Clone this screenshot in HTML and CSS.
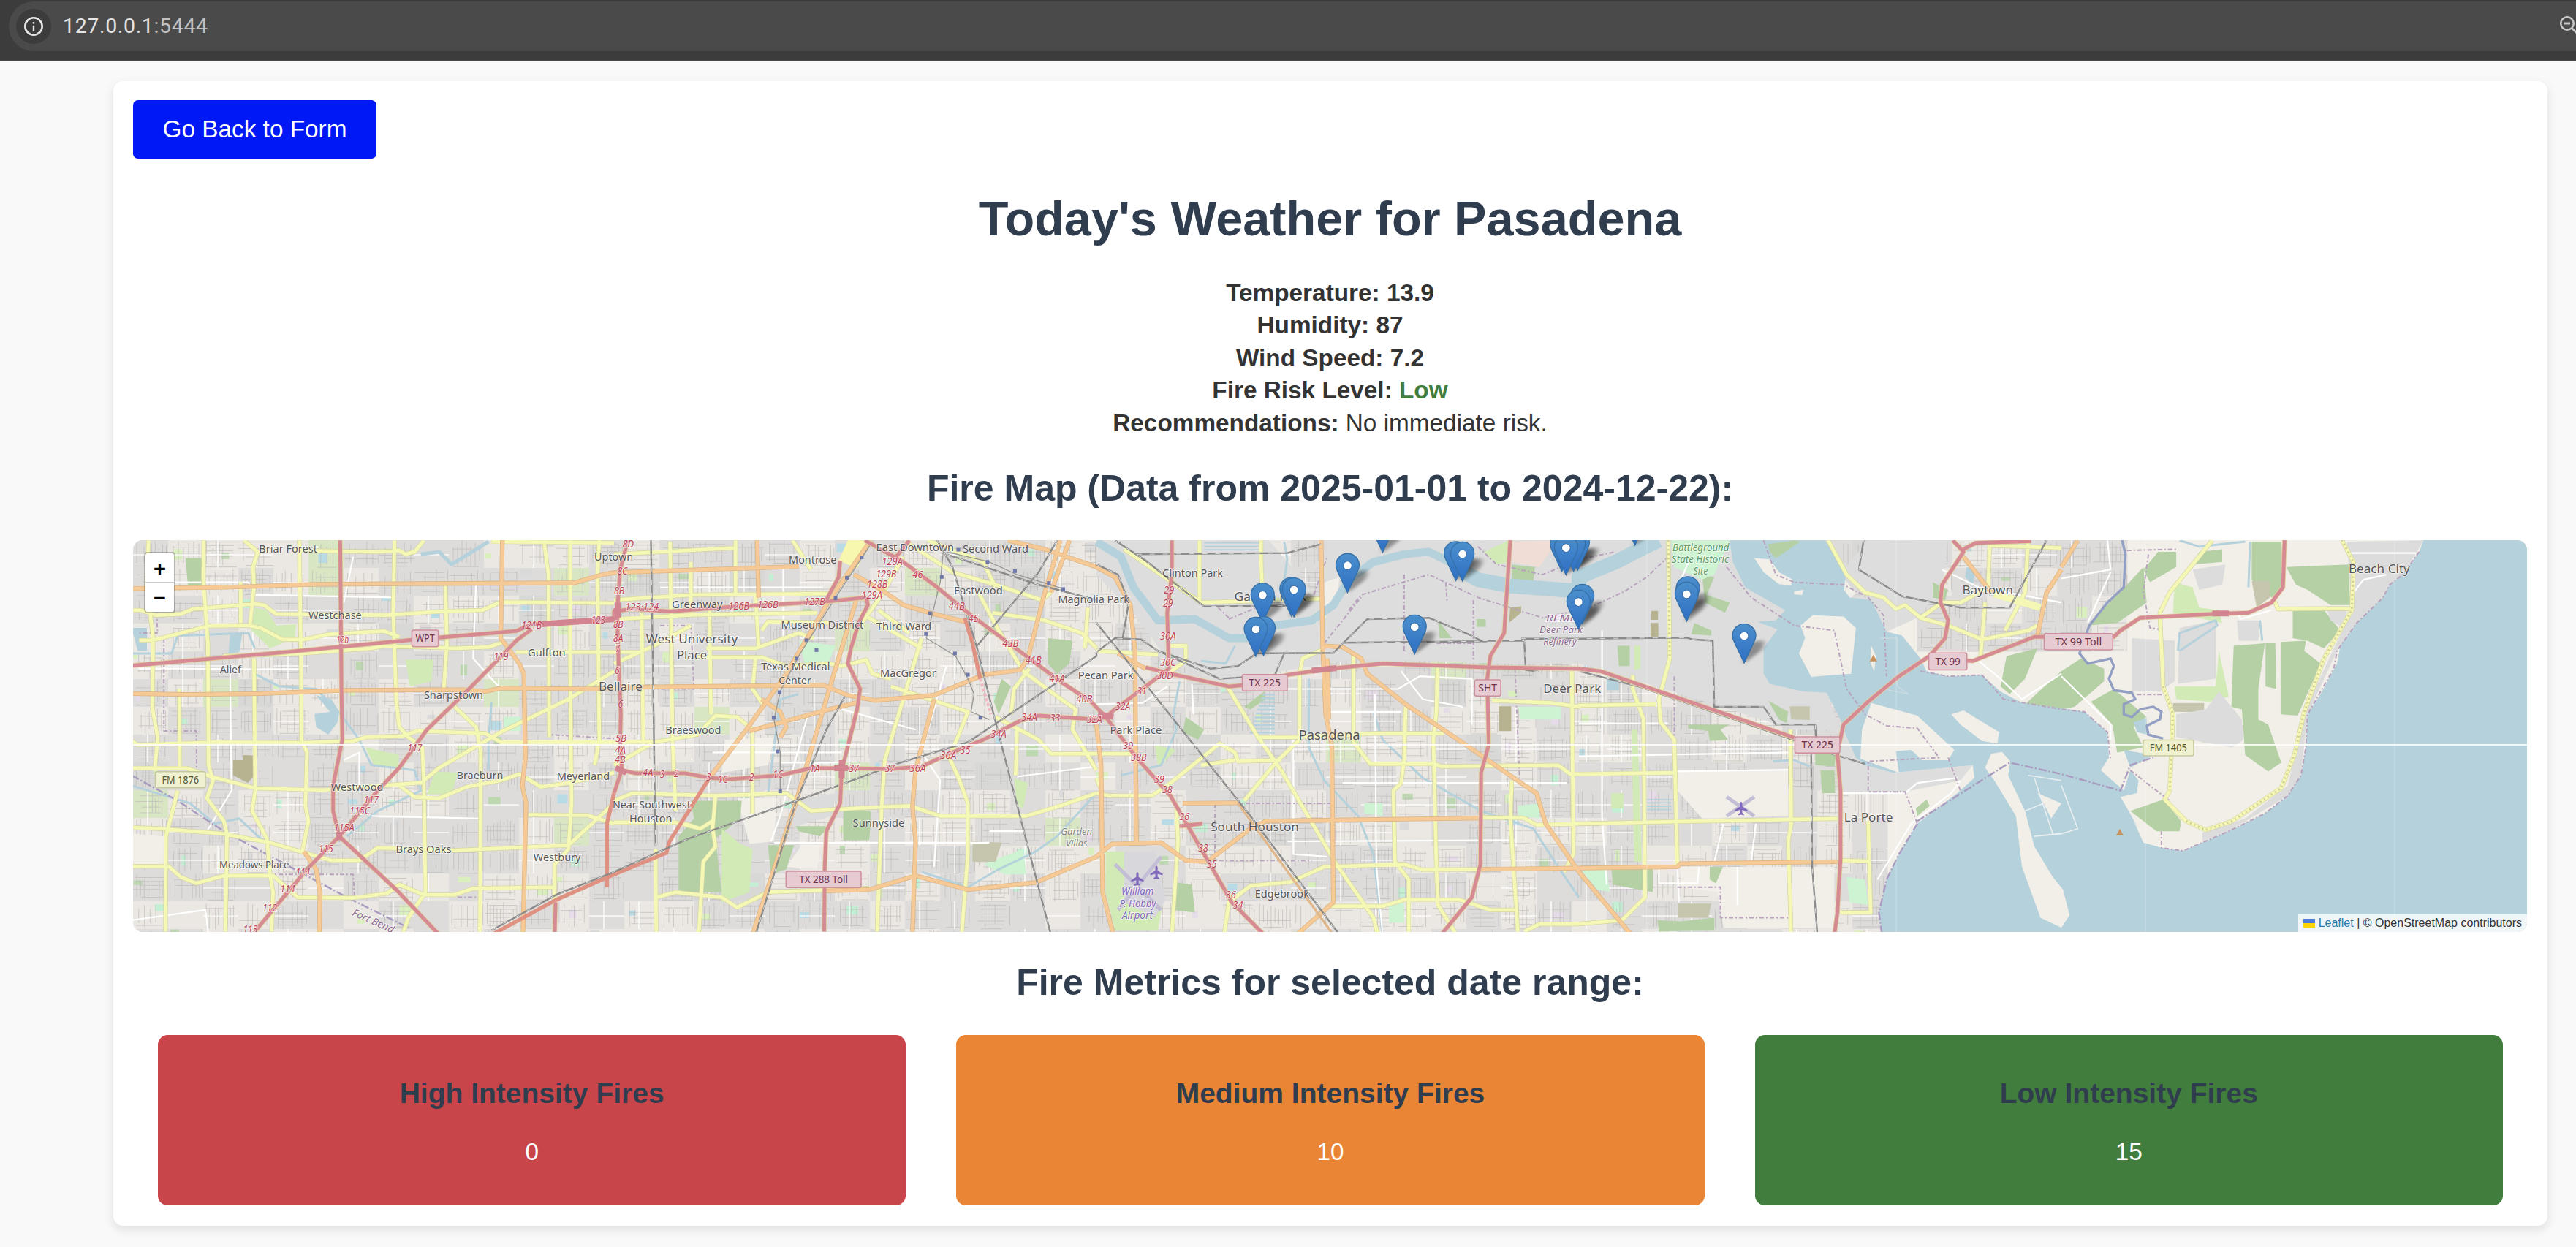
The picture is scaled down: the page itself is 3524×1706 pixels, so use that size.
FILE: index.html
```html
<!DOCTYPE html>
<html lang="en">
<head>
<meta charset="utf-8">
<title>Fire Weather Dashboard</title>
<link rel="stylesheet" href="styles.css">
</head>
<body>
<header class="browser-bar">
  <div class="omnibox">
    <span class="site-info">
      <svg width="28" height="28" viewBox="0 0 28 28"><circle cx="14" cy="14" r="11.7" fill="none" stroke="#e6e6e6" stroke-width="2.6"/><path d="M14 12.8V20" stroke="#e6e6e6" stroke-width="2.4"/><circle cx="14" cy="9.2" r="1.5" fill="#e6e6e6"/></svg>
    </span>
    <span class="url">127.0.0.1<span class="port">:5444</span></span>
    <svg class="zoom-icon" width="22" height="28" viewBox="0 0 22 28"><circle cx="10" cy="10" r="8.8" fill="none" stroke="#c7c7c7" stroke-width="2.5"/><path d="M6 10h8M16.500 16.500l8 8" stroke="#c7c7c7" stroke-width="2.800"/></svg>
  </div>
</header>
<main class="card">
  <button class="back">Go Back to Form</button>
  <h1>Today's Weather for Pasadena</h1>
  <div class="weather">
    <strong>Temperature: 13.9</strong>
    <strong>Humidity: 87</strong>
    <strong>Wind Speed: 7.2</strong>
    <strong>Fire Risk Level: <span class="risk-low">Low</span></strong>
    <span><strong>Recommendations:</strong> No immediate risk.</span>
  </div>
  <h2>Fire Map (Data from 2025-01-01 to 2024-12-22):</h2>
  <section class="map">
    <svg id="tiles" class="tiles" width="3275" height="536" viewBox="0 0 3275 536"></svg>
    <div class="zoom-control"><span>+</span><span>−</span></div>
    <div class="attribution"><svg width="16" height="12" viewBox="0 0 12 8" preserveAspectRatio="none"><path fill="#4C7BE1" d="M0 0h12v4H0z"/><path fill="#FFD500" d="M0 4h12v4H0z"/></svg><span><a>Leaflet</a> | © OpenStreetMap contributors</span></div>
  </section>
  <h2 class="metrics-title">Fire Metrics for selected date range:</h2>
  <section class="metrics">
    <div class="metric high"><h3>High Intensity Fires</h3><p>0</p></div>
    <div class="metric medium"><h3>Medium Intensity Fires</h3><p>10</p></div>
    <div class="metric low"><h3>Low Intensity Fires</h3><p>15</p></div>
  </section>
</main>
<script src="map.js"></script>
</body>
</html>
```

FILE: styles.css
```css
* { box-sizing: border-box; }
html, body { margin: 0; height: 1706px; overflow: hidden; }
body {
  background: #f9f9f9;
  color: #333;
  font: 33.33px/44.44px "Liberation Sans", Arial, sans-serif;
}
.browser-bar { height: 84px; padding: 2px 0 0 12px; background: #3c3c3c; border-bottom: 2px solid #474747; }
.omnibox {
  height: 68px; display: flex; align-items: center; padding-left: 10px;
  background: #4a4a4a; border-radius: 34px 0 0 34px; overflow: hidden;
}
.site-info { width: 48px; height: 48px; border-radius: 50%; background: #3c3c3c; display: flex; align-items: center; justify-content: center; }
.url { margin-left: 16px; font: 28.5px/40px Roboto, sans-serif; letter-spacing: .65px; color: #e3e3e3; }
.port { color: #c0c0c0; }
.zoom-icon { margin-left: auto; }
.card {
  margin: 27px 39px 0 155px; padding: 26px 28px 27px 27px; height: 1566px;
  background: #fff; border-radius: 13.3px; box-shadow: 0 5px 14px rgba(0,0,0,.11);
}
.back {
  display: block; width: 333px; height: 80px; padding: 0; border: 0; border-radius: 6.7px;
  background: #0018f5; color: #fff; font: 33.33px "Liberation Sans", Arial, sans-serif;
}
h1, h2, h3 { color: #303d4f; font-weight: bold; text-align: center; }
h1 { margin: 38px 0 35px; font-size: 66.67px; line-height: 89px; }
h2 { margin: 34px 0 37px; font-size: 50px; line-height: 67px; }
.weather { display: flex; flex-direction: column; align-items: center; }
.risk-low { color: #417d3c; }
.map { position: relative; height: 536px; overflow: hidden; border-radius: 13.3px; background: #ddd; }
.tiles { display: block; }
.zoom-control {
  position: absolute; left: 15px; top: 16px; width: 43px; height: 84px; background: #fff;
  border: 2px solid rgba(0,0,0,.22); background-clip: padding-box; border-radius: 5px;
}
.zoom-control span { display: block; height: 40px; text-align: center; font: bold 29px/43px "Liberation Sans", sans-serif; color: #000; }
.zoom-control span:first-child { border-bottom: 1px solid #ccc; }
.attribution {
  position: absolute; right: 0; bottom: 0; height: 24px; padding: 0 7px; display: flex; align-items: center; gap: 5px;
  background: rgba(255,255,255,.8); font-size: 16px; line-height: 24px; color: #333; white-space: nowrap;
}
.attribution a { color: #2a7cae; }
.metrics-title { margin: 36px 0 38px; }
.metrics { display: flex; gap: 69px; padding: 0 33px 0 34px; }
.metric { flex: 1; height: 233px; padding-top: 54px; border-radius: 13.3px; color: #fff; text-align: center; }
.metric h3 { margin: 0 0 32px; font-size: 39px; line-height: 52px; }
.metric p { margin: 0; }
.high { background: #c84549; }
.medium { background: #e98534; }
.low { background: #417d3c; }

.tiles text { font-family: "Noto Sans", sans-serif; paint-order: stroke; stroke: rgba(255,255,255,.6); stroke-width: 2px; }
.place { fill: #555; }
.exit { fill: #bd4456; font-style: italic; }
.site { fill: #8d6a90; font-style: italic; }
.park-name { fill: #5d9a62; font-style: italic; }
.air { fill: #8068bb; font-style: italic; }
.grey { fill: #888; font-style: italic; }
.tiles .ref { fill: #6e3048; stroke: none; }
.tiles .ref-fm { fill: #565830; stroke: none; }
```

FILE: map.js
```js
// Survey sheets A-E, west to east: [x offset, x scale]; all share one y scale.
const SHEET = { A: [-2, .42092], B: [658, .42092], C: [1318, .42092], D: [1978, .42092], E: [2638, .44898] };
const SY = .34758, OY = -5;
const out = [];
const pt = (s, x, y) => [SHEET[s][0] + x * SHEET[s][1], OY + y * SY];

// "A 1,2 3,4 B 5,6" -> map-space path; a letter switches sheet.
function path(str) {
  let s = 'A', d = '';
  for (const t of str.trim().split(/\s+/)) {
    if (SHEET[t]) { s = t; continue; }
    const [x, y] = t.split(',').map(Number), p = pt(s, x, y);
    d += (d ? 'L' : 'M') + p[0].toFixed(1) + ' ' + p[1].toFixed(1);
  }
  return d;
}
const join = (list, z = '') => list.trim().split('\n').map(l => path(l) + z).join('');
const fill = (c, list) => out.push(`<path fill="${c}" d="${join(list, 'Z')}"/>`);
const line = (c, w, list, extra = '') => out.push(`<path fill="none" stroke="${c}" stroke-width="${w}" stroke-linejoin="round" ${extra} d="${join(list)}"/>`);

// Deterministic city blocks.
let seed = 7;
const rnd = () => (seed = (seed * 16807) % 2147483647) / 2147483647;
function blocks(x0, y0, x1, y1) {
  let streets = '', white = '';
  for (let x = x0; x < x1; x += 48) for (let y = y0; y < y1; y += 38) {
    const w = 48, h = 38, r = rnd();
    const c = r < .58 ? '#dddcdb' : r < .95 ? '#ebe8e3' : r < .97 ? '#d8e6c4' : '#d8d8d6';
    out.push(`<rect x="${x}" y="${y}" width="${w + .5}" height="${h + .5}" fill="${c}"/>`);
    if (rnd() < .3) out.push(`<rect x="${x + rnd() * 30}" y="${y + rnd() * 20}" width="${5 + rnd() * 12}" height="${5 + rnd() * 10}" fill="${['#c3f0d4', '#bdd8b0', '#dadada', '#d9efbd', '#b9dbe6', '#e6dbe8'][Math.floor(rnd() * 6)]}"/>`);
    if (rnd() < .86) {
      const a = 4 + rnd() * 5, b = 5 + rnd() * 8;
      for (let i = a; i < w; i += a) if (rnd() < .7) streets += `M${x + i} ${y + rnd() * 12}V${y + h - rnd() * 10}`;
      for (let j = b; j < h; j += b) if (rnd() < .7) streets += `M${x + rnd() * 14} ${y + j}H${x + w - rnd() * 12}`;
    }
    if (rnd() < .24) white += `M${x + 20} ${y}v${h}`;
    if (rnd() < .24) white += `M${x} ${y + 20}h${w}`;
  }
  out.push(`<path d="${streets}" stroke="#bdbab8" stroke-width=".9" opacity=".75"/><path d="${white}" stroke="#fff" stroke-width="1.6" opacity=".85"/>`);
}
out.push('<rect width="3275" height="536" fill="#f2efe9"/>');
blocks(0, 0, 2380, 536);
blocks(2440, 0, 2710, 130);

// industrial ground along the ship channel
fill('#dddddd', `C 0,15 560,15 720,240 750,15 1568,15 D 490,15 540,200 670,290 600,540 730,610 805,615 850,760 700,760 250,590 0,500 C 1280,500 860,480 600,530 430,570 240,500 120,300 0,150
D 940,15 1200,15 1180,200 1100,320 1000,375 940,250 860,130
D 850,740 930,900 1020,930 1280,900 1240,960 1060,1005 850,1005`);
fill('#f2efe9', `C 740,180 790,160 785,210 740,330
D 320,920 680,920 680,1100 400,1110 320,1000
D 330,1300 830,1300 830,1540 470,1540 450,1400 330,1380
A 0,1170 110,1180 110,1290 0,1290
B 360,800 520,790 500,900 350,930
B 400,1030 530,1030 520,1200 440,1210
B 610,1215 670,1215 660,1310 560,1300`);
fill('#b4d0a4', `A 175,85 228,85 228,190 183,190
B 250,1040 415,1040 410,1110 330,1190 350,1400 210,1400 210,1180 260,1110
B 745,1070 835,1080 830,1195 745,1195
B 500,1215 585,1215 560,1310 510,1330
B 590,1140 700,1140 670,1180 600,1160
B 1410,400 1490,410 1480,500 1440,540 1410,500
B 1260,560 1290,590 1250,700 1235,650
C 480,670 545,610 550,640 500,680
C 290,710 350,760 330,800 280,770
C 1350,110 1425,120 1420,175 1350,170
C 1110,330 1155,400 1115,400
C 1235,325 1265,325 1265,355 1235,355
C 250,1360 310,1370 320,1480 250,1470
D 400,150 440,160 415,230 490,260 475,300 410,260
D 375,340 430,370 430,390 365,385
D 125,430 165,430 165,510 130,510
D 355,740 490,740 460,760 485,800 425,805 420,765 355,755
D 615,645 680,690 675,735 650,720
D 768,855 835,855 830,905 768,900
D 785,920 830,920 833,1010 790,1010
D 425,1300 468,1300 445,1365 425,1350
D 255,1510 330,1515 440,1500 440,1550 260,1555
D 105,1300 240,1305 240,1400 110,1370
D 1150,180 1200,210 1190,250 1150,240
D 1390,470 1490,440 1450,560 1400,620 1370,590
E 580,20 670,20 680,200 640,240 580,170
E 525,430 620,420 600,600 600,720 630,740 670,890 630,925 560,860 550,680 518,670
E 622,420 652,420 655,600 622,590
E 668,415 745,410 740,450 790,500 720,705 668,700
E 705,290 800,290 850,370 800,440 750,410 705,400
E 685,120 875,110 880,270 820,270 750,210 715,190
E 80,350 200,190 250,120 260,260 170,340
D 1450,660 1568,530 E 60,480 130,520 130,570 40,670 0,680
E 90,650 160,600 260,710 220,750 250,830 170,850 155,740
E 295,60 350,60 350,120 270,180 250,130
E 490,50 490,100 400,110 420,60
E 430,760 442,760 442,810 430,810`);
fill('#d2eab5', `A 400,280 440,290 470,350 535,345 530,400 450,440 390,370
A 890,485 980,485 975,570 905,590
A 760,830 870,860 865,910 790,905
A 985,925 1060,930 1040,1015 960,1015
B 350,1150 410,1210 450,1230 440,1400 350,1440
B 1300,950 1345,970 1330,1070 1310,1060
C 1260,60 1340,15 1345,100 1300,110
C 190,820 260,840 200,910
C 30,1240 100,1240 220,1400 200,1550 60,1550 30,1400
D 180,430 200,430 200,520 180,525
D 105,1010 145,1010 145,1070 105,1070
D 170,760 190,760 205,1280 180,1280
E 345,180 400,200 420,280 480,290 490,340 340,300
E 480,450 510,630 450,650 350,640 345,590 470,590`);
fill('#d8d7dc', `C 90,1240 190,1240 225,1430 190,1500 90,1440`);
fill('#cdf3d2', `B 600,410 720,430 700,490 620,500
B 1200,1290 1330,1230 1340,1330 1270,1330
C 1370,1060 1440,1050 1440,1110 1370,1100
C 870,1050 930,1050 930,1100 870,1090
C 1370,670 1510,670 1510,720 1380,720
D 300,15 490,15 440,150 400,170 310,120
D 5,1310 90,1310 100,1400 60,1390
D 870,1340 930,1350 940,1450 880,1440
C 950,1440 1000,1440 1000,1520 950,1520
A 1210,710 1265,710 1265,765 1210,765`);
fill('#b7b391', `A 330,880 362,880 362,860 398,862 395,945 378,970 330,940
C 1308,668 1348,668 1348,766 1308,766
C 1345,280 1380,275 1380,300 1340,340
D 235,293 257,293 257,328 235,328
D 233,340 258,340 258,398 233,398`);
fill('#c6c5ae', `D 323,1445 430,1445 420,1500 323,1500
D 685,668 750,668 750,722 690,720
B 1165,1200 1260,1205 1240,1280 1165,1280
E 580,175 635,175 635,240 595,280
E 340,655 435,655 435,692 340,690`);
fill('#dcdcdc', `E 215,400 345,410 345,570 300,610 215,610
E 350,700 440,680 480,610 550,720 555,800 520,830 350,790
E 360,360 470,330 470,560 355,580
E 400,130 500,110 490,190 420,210
E 535,330 605,330 600,410 540,410
E 870,20 1105,15 1040,150 980,240 900,340 840,450 750,700 730,940 690,1020 510,1160 430,1200 430,1165 560,1110 690,980 740,690 885,290
E 810,290 870,290 860,360 820,330
B 590,1040 720,1010 710,1100 590,1140`);
fill('#efddd6', `C 1345,20 1500,15 1440,120 1350,100`);
fill('#f8f7b0', `B 760,15 835,15 790,125 730,95`);

// water
line('#b4d1dc', 11, `C 0,20 80,80 120,200 200,330 320,325 430,400 520,400 580,350 700,330 770,270 820,170 900,100 1000,70 1080,60 1200,130`);
line('#b4d1dc', 20, `C 1180,130 1240,170 1350,195 1568,215 D 0,160 120,100 200,50 260,15`);
line('#b4d1dc', 3, `A 0,460 130,460 150,390 380,380 400,440
A 400,540 480,590 600,600 680,700 740,800 780,900 920,920 940,1000 800,1080 700,1180
A 0,980 190,1050 270,1130 350,1110 420,1190 560,1240
B 1568,1010 1440,1180 1370,1240 1250,1310 1150,1380 1000,1320
C 600,250 620,90 610,20
C 690,560 690,830 740,960 850,1100 900,1250 930,1568
C 900,690 930,800 1060,950 1250,1080 1420,1150 1500,1300 1568,1420
C 450,430 420,500 340,490
C 270,570 250,700 260,760 210,900 80,940
D 630,885 700,880 750,905
E 360,15 420,40 560,20
E 355,450 360,380 470,330 475,350 360,450
E 575,20 570,200
E 605,330 612,410
A 1170,650 1160,800 1160,920
B 500,1020 540,640 600,620`);
line('#b4d1dc', 5, `A 940,70 1000,60 1040,110 1160,20`);
fill('#b4d1dc', `A 0,360 50,360 50,450 20,450
A 320,385 360,385 350,455 315,460
A 600,625 650,640 675,690 670,730 640,780 600,750 595,700 645,690
D 490,15 500,100 540,200 670,290 640,330 580,335 645,365 600,440 600,540 620,580 730,610 805,615 850,720 860,760 900,870 930,900 1020,930 1280,900 1285,950 1230,1010 1100,1130 1040,1250 1000,1350 975,1480 985,1568 E 1425,1568 1425,10 1105,10 1090,60 1040,150 1000,190 980,240 900,340 850,430 840,500 790,620 750,700 745,830 730,940 690,1020 620,1090 510,1160 370,1237 305,1225 250,1205 220,1120 235,1150 205,1080 180,1025 230,1010 235,960 210,920 190,1000 120,920 145,870 140,770 70,690 0,675 D 1440,655 1370,610 1310,545 1200,550 1130,530 1110,480 1050,390 1000,375 950,250 880,240 860,130 800,15
E 220,730 260,715 260,780 230,770
E 190,840 280,860 210,910
D 1260,120 1290,130 1280,190 1255,160
D 90,555 130,560 130,605 90,605`);
line('#b4d1dc', 1.6, `C 350,25 530,25
C 350,38 530,38
C 350,52 530,52
D 220,1035 300,1035
D 220,1048 300,1048
D 220,1062 300,1062
D 220,1075 300,1075`);
for (let y = 622; y < 785; y += 15) line('#b4d1dc', 2.6, `C ${540 - (y - 622) * .28},${y} 580,${y}`);
fill('#f2efe9', `D 570,85 620,90 650,140 695,170 690,192 650,188 600,140
D 720,350 760,310 860,315 900,360 885,540 825,545 755,552 715,460 735,400
D 950,655 1100,705 1220,840 1200,880 1115,880 1080,840 1030,845 1040,930 915,875 920,760
D 1210,700 1250,685 1365,770 1360,815 1310,805 1240,740
D 1340,855 1375,848 1402,885 1395,940 1450,1080 1480,1220 1540,1340 E 5,1390 25,1490 0,1540 D 1500,1500 1440,1300 1420,1100 1350,960 1320,910
D 1490,1010 1568,1050 1535,1110 1510,1050
D 950,430 965,470 960,530 948,500
D 700,215 730,210 725,230 700,228
D 865,170 900,225 880,240 862,210`);
fill('#b4d0a4', `D 615,30 700,15 720,20 640,85 620,60
E 210,1080 310,1035 365,1120 360,1160 290,1160
D 1095,1070 1130,1035 1140,1060 1100,1100`);
line('#e9eff0', 1.6, `E 0,980 50,1150 0,1170 D 1480,1180 1568,1168
D 1460,940 1568,960
D 1480,950 1540,1170
D 1450,1080 1510,1050`);
line('#cfdde1', 1.2, `D 980,400 1035,400 1035,590 1070,620 990,600`);

// minor white roads
line('#fff', 2.2, `A 100,180 380,180 400,230 850,240
A 20,520 160,520 330,522 550,522
A 320,520 325,1000 240,1170
A 720,80 690,260
A 1015,190 1120,180 1110,480 1200,600
A 690,880 740,850 740,980
A 780,1100 1130,1110
A 0,1510 240,1470 250,1568
B 150,200 680,200
B 550,120 550,400
B 320,850 740,850
B 520,1205 1220,1205
B 540,890 740,890
B 630,700 540,1100 510,1200
B 1080,510 1000,850 1060,960 1040,1300
B 1310,945 1568,905
B 1220,1160 1330,1160
B 740,680 980,760
C 580,600 980,600 1050,550 1220,560 1220,740
C 740,690 990,690
C 640,780 640,1250 750,1260
C 530,1120 1000,1110
C 620,1200 1350,1195
C 905,620 910,1300 930,1568
C 800,970 1530,970
C 990,530 1060,640 1190,670
C 310,580 315,700
C 0,660 150,655 230,590
D 0,735 290,735
D 0,865 690,850
D 75,370 75,1100 90,1370
D 310,925 680,918
D 850,1010 1060,1010 1100,970 1230,950
D 1240,960 1210,1010 1080,1130 970,1350
D 260,1310 260,1365 385,1365 390,1300
D 470,1130 440,1280
D 575,1130 560,1280
D 515,1300 515,1450
D 320,1300 325,1440
D 310,230 360,90
D 1180,130 1300,200 1568,260
D 1300,490 1370,560 1440,640 1568,540
E 870,65 1080,65
E 990,150 920,170 890,220
E 0,550 150,740 150,800
E 540,310 545,325 640,290
E 0,165 150,130 140,15
E 80,340 150,140`);
// boundaries
line('#b8a2bd', 2, `C 430,320 370,250
C 430,325 560,260 700,250 750,80
C 820,290 860,230 1080,150 1240,240 1450,320 D -40,300
C 740,420 860,240
C 1000,150 1000,460
C 1135,180 1140,260
C 1225,250 1225,490
C 1105,420 1225,420
C 1240,40 1300,110 1450,150 D 0,90 120,60
C 385,1050 770,1050
C 385,1050 385,1275 700,1275
C 1360,520 1375,950
D 480,120 560,240 700,350 830,370 870,600 930,700 1000,745 1100,755 1170,870 940,885 940,1005 1060,1005 1100,1130
D 1200,870 1240,1000
D 600,15 640,150 700,180 860,190 940,240 990,310 1000,550
D 310,550 310,820
D 0,300 150,215 220,160 290,80
D 1110,530 1200,550 1310,545 1380,640 E 0,680 70,690 140,770 150,880
E 1090,60 1040,150 1000,190 980,240 900,340 840,450 830,520 750,700 745,830 730,940 690,1020 620,1090 510,1160 370,1237 305,1225 305,1160
E 200,55 350,50
E 265,70 250,220 270,360 300,365
E 230,622 310,622
E 210,920 330,1040
A 80,300 85,380 20,380
A 105,400 105,765 210,765 212,930
A 1360,680 1360,780 1568,795
A 310,1530 310,1330 720,1330 725,1430
A 1060,1420 1135,1420 1135,1540
B 150,350 250,350 260,600 130,600
D 320,1380 460,1380 460,1500 690,1500`, 'stroke-dasharray="6 3 2 3"');
line('#a99bc0', 2.4, `A 0,940 150,1040 300,1160 700,1420 900,1540
D 1100,1120 1230,1020 1400,890 1568,935 E 0,935 180,1000 210,900 280,870
D 1100,1130 1040,1250 1000,1350 975,1480 985,1568`, 'stroke-dasharray="11 3 2 3"');
line('#929fc2', 3.4, `E 185,15 195,70 190,200 140,260 85,350 55,460 80,500 150,480 160,510 145,560 160,605 215,615 225,640 190,660 190,700 215,710 240,680 280,670 305,690 300,720 260,745 265,780 310,795`);

// road network
const yellow = `A 55,15 50,200 70,400 68,680 85,790 75,920
A 235,15 233,170 248,420 250,900 265,960 245,1030 300,1120 310,1170 305,1555
A 0,290 30,290 80,310 160,305 200,285 400,265 430,270 470,305 830,310 1000,295 1140,290 1200,258 1568,262
A 25,408 70,408 160,380 250,352 380,350 420,360 490,405 560,405 640,385 820,372 870,395
A 300,470 560,460 780,440 820,430 1060,440 1160,435 1210,415
A 365,15 410,60 395,120 398,200 385,345
A 520,55 800,60 870,55 890,70 920,60 950,15
A 545,15 550,430 552,800 570,850 565,1060 575,1120 555,1240
A 398,480 402,1000 392,1080 440,1190 450,1330 460,1400 455,1555
A 355,180 355,340
A 855,15 850,290 860,640 870,750 900,790 945,830 950,980 955,1400 900,1500 880,1568
A 1020,190 1025,420 1015,600
A 1050,670 1120,750 1135,850 1132,1568
A 0,805 20,820 270,810 560,812 720,805 760,790 880,785 930,765 1150,775 1200,810 1568,810 B 130,808
A 0,912 180,912 260,945 400,990 620,998 950,968
A 1568,530 1420,640 1200,770 1000,910 950,960
A 870,980 920,1025 1000,1030 1090,985 1200,960 1260,935 1330,985 1420,970 1568,930
A 0,1145 90,1150 300,1170 450,1205 550,1240 650,1275 740,1275 800,1225 1050,1235 1420,1215 1568,1050
A 0,1298 120,1298 160,1340 210,1365 300,1335 460,1335 540,1420 720,1422 830,1405 870,1370 950,1410 1050,1410 1110,1385 1375,1380
A 1375,1568 1375,1290 1420,1230 1430,1050 1425,480 1425,15
A 1340,15 1355,150 1357,790
A 1520,15 1515,150 1520,800 1505,900
A 1170,20 1568,25
A 155,600 157,910
A 110,1555 112,1180 150,1000
A 1290,1095 1480,1097 1568,1130
A 1250,455 1568,455 B 90,455
B 0,70 390,45
B 182,20 190,800 200,1080
B 395,15 395,230
B 250,100 250,300
B 0,250 250,230 700,225
B 0,325 260,308 660,300
B 90,300 95,820
B 310,290 315,700
B 300,440 460,440 600,380 650,400
B 480,370 500,335 700,340
B 0,500 130,430 250,350
B 270,475 480,475 560,510 700,500 740,510 820,485 840,540 900,560
B 0,900 130,810 270,780 330,705 400,710 450,760 450,1090
B 460,230 470,430
B 460,480 450,600 490,670
B 580,15 640,130
B 940,80 870,230 800,350
B 800,300 1000,440
B 860,290 960,380
B 960,30 1100,140 1240,190 1390,250 1420,220
B 1020,15 1200,100 1240,200
B 1180,210 1250,370 1330,530 1430,620 1500,680 1490,760 1568,920
B 1000,400 880,880 870,1060 855,1555
B 900,590 1150,690 1090,870 1120,950 1150,1050 1150,1250 1130,1568
B 0,1040 60,1010 200,1015 330,1020 560,1010 640,1080 780,1070 960,1060 1060,1100 1340,1100 1450,1060 1568,1010
B 330,1020 320,1150 330,1220 290,1280 275,1568
B 0,1125 200,1125 280,1150
B 230,1130 280,1150 320,1120
B 135,1230 137,1568
B 137,1420 200,1400 350,1420 400,1460 500,1400 830,1385
B 1240,710 1380,800 1420,855 1568,855 C 130,855
B 1310,760 1305,940
B 1290,700 1300,600 1350,520
B 1230,300 1400,330 1520,380 1568,440
B 1540,280 1530,440
C 90,50 340,260 730,245
C 335,15 335,260
C 535,15 535,100 540,250
C 240,430 290,430 290,490 230,540
C 0,450 200,465
C 735,445 670,480 660,540 660,800 590,880 480,1040
C 835,460 835,810 890,895 1100,895 1120,905 1500,900 1540,935 1568,935 D 310,930
C 1108,500 1105,690 1095,800 1105,1310 1110,1450 1170,1568
C 1005,670 1000,880 990,970 965,1000 970,1280 1015,1350 1015,1568
C 425,590 520,780 600,920 780,1290 900,1500 915,1568
C 530,790 650,790 900,775 1130,775
C 0,1010 40,1020 180,1020 230,980 400,815 450,850 460,885 600,880
C 340,900 450,880
C 0,950 20,1010
C 260,1060 265,1200 245,1568
C 415,1568 430,1440 500,1375 630,1360 740,1300 1000,1290 1060,1312 1240,1310
C 760,1455 930,1455 1000,1430 1180,1430 1280,1470 1370,1470
C 1350,960 1345,1110 1370,1568
C 1250,1105 1390,1108 1430,1135 1568,1130 D 400,1120 840,1110
C 1285,645 1480,655 1568,670 D 0,665 250,660
C 1545,530 1550,1250 1520,1320
C 1390,1555 1440,1525 1568,1525 D 0,1525 140,1510 215,1420 210,720 175,600 175,545
D 290,15 295,480 260,640 265,730 310,800 320,1300
D 688,760 690,1130 680,1200 690,1568
D 850,1275 945,1278
D 940,1120 948,1480 850,1480
D 810,15 870,150 930,220 990,240 1030,285 1060,270 1110,320 1200,350 1310,405 1460,370 1490,350
D 1335,30 1330,200 1240,260 1180,260 1110,320
D 1320,260 1305,480
D 1460,20 1450,220 1385,370
D 1330,35 1568,45
E 460,15 330,220 300,300 310,590 340,700 330,1000 315,1035 380,1120 440,1155 520,1120 670,990 710,860 740,690 800,480 885,290 890,100 855,15
E 650,255 660,285 880,283`;
line('#d5d6a4', 6.2, yellow); line('#f5f7b4', 4.8, yellow);
line('#d0cd98', 3, `E 310,590 340,700 330,1000
E 380,1120 440,1155 520,1120 670,990 710,860 740,690 800,480 885,290 890,100 855,15
D 290,15 295,480`, 'stroke-dasharray="2 4"');
line('#f5f7b4', 10, 'D 1350,225 1500,280');
const orange = `A 0,205 300,200 600,188 1440,182 1530,150 1568,142 B 300,130 600,118
A 0,618 200,622 420,618 700,605 1080,603 1150,610 1200,597 1500,600 B 95,592 680,585 760,625 850,645 1040,625 1200,545 1320,525 1345,480 1400,220 1440,60 1450,15
A 1205,15 1200,400 1260,500 1275,540 1280,870 1270,980 1282,1050 1272,1568
A 560,1240 600,1310 612,1400 610,1568
B 465,15 470,240
B 835,15 780,110 700,250 560,540 430,760 310,950
B 780,150 870,210 940,270 1040,305 1140,335
B 440,765 700,680 800,650
B 480,640 540,690 560,750 540,790
B 790,240 690,640 590,1050 450,1568
B 1040,640 980,920 970,1060 980,1200 970,1555
B 683,1395 830,1390 980,1335 1150,1390 1370,1362 1568,1260 C 50,1210 210,1205 290,1275 360,1280 500,1150 550,1120 1250,1108
B 1280,15 1400,50 1568,120 C 60,160 110,270 125,450 130,1210
B 1480,15 1420,220
C 70,460 160,520
C 0,740 15,900 20,1400 55,1568
C 280,1050 460,1048
C 730,15 735,430 745,700 765,820 770,1440 650,1568
C 750,480 755,720
C 735,430 800,435 860,480 880,540 1010,665 1200,820 1380,970 1430,1010 1460,1130 1568,1320 D 170,1568
C 1250,1310 1568,1305 D 320,1300 330,1288 840,1280
D 1250,80 1340,220
D 1568,130 1520,220 1490,390
E 50,15 0,120`;
line('#dcb27f', 6.2, orange); line('#f5ca97', 4.8, orange);
line('#e0b88c', 3.4, 'C 460,1050 770,1568');
line('#e09282', 5.4, `B 310,950 180,1200 170,1245 0,1330 A 1380,1430 1170,1568
A 1545,1380 1545,1130 1568,1010
B 1140,320 1165,420 1190,560`);
line('#efb9c4', 4, 'B 1190,560 1225,700', 'stroke-dasharray="4 3"');

const rail = `B 120,15 135,1220
A 1170,1550 1380,1410 1568,1320 B 240,1190 640,1020 930,890 1150,810 1568,470 C 0,455 60,400 145,405 200,450 370,520 460,510 520,460 770,458 880,325 1080,320 1210,385 1250,410 1390,410 1395,525 1440,532
B 1050,15 1100,120 1180,440 1240,730 1330,1150 1420,1568
B 1440,15 1380,140 1180,430
B 1080,70 1380,190 1568,250
B 750,630 690,760 590,1050 460,1568
C 60,15 160,95 350,275 640,272
C 130,70 620,65 730,30
C 0,110 70,150 105,260 85,400
C 0,340 60,430 500,1100 790,1568
C 200,450 400,560 580,545 610,460
C 800,418 1270,412
C 1380,402 1568,402 D 350,398 370,405 435,410 440,670 600,670 640,740 768,740 770,790 755,860 758,1300 775,1568
D 0,530 200,592 700,802
D 820,855 930,895
D 925,15 910,130 1050,235 1240,280 1400,280 1520,15`;
line('#8a8a8a', 2.4, rail); line('#dcdcdc', 1, rail, 'stroke-dasharray="7 11"');
line('#9a9a94', 1.4, `B 1070,60 1060,180 1015,400 1110,470 1150,560 1170,620 1160,690 1220,720
B 840,20 720,240 600,470 540,610 520,720 540,850 540,1000
B 1080,60 1220,100 1310,150 1460,205`);

const motorway = `A 678,15 682,600 685,800 655,980 655,1080 675,1180
A 0,508 500,455 900,408 1250,372 1300,345 1568,325 B 0,295 60,285 180,295 400,275 560,265 700,255 820,240
A 1300,365 1250,410 1215,455 1080,620 960,760 870,910 800,1000 675,1180 570,1310 400,1555
A 675,1180 860,1390 1000,1568
A 1375,1568 1378,1440
B 45,15 20,130 10,300 15,500 22,700 20,800 25,920 70,932 230,932 310,950 380,955 540,940 640,912 740,912 900,915 1000,905 1080,860 1200,800 1320,725 1380,705 1568,720 C 30,710
B 25,920 0,1010
B 735,95 730,160 690,250
B 820,240 825,270 795,340 770,440 760,500 800,600 790,680 755,850 740,920 735,1050 690,1160 685,1300 683,1555
B 815,15 940,100 1050,200 1150,300 1250,390 1350,480 1450,570 1550,650 C 30,710 130,870 240,1020 350,1250 440,1440 545,1568
B 960,15 910,90
C 245,15 245,150 230,300 235,520 160,590 60,680 30,710
C 160,515 240,540 430,590 480,585 620,545 760,520 930,500 1270,515 1568,520 D 70,530 250,605 700,792
C 1345,15 1325,380 1280,470 1270,560 1275,820 1250,930 1248,1290 1220,1420 1120,1568
C 270,1140 345,1130
D 1215,15 1250,60 1180,190 1175,260 1200,330 1190,400 1140,470 1040,550 940,650 860,740 840,850 850,1000 850,1270 840,1480 830,1568
D 1250,50 1290,25 1470,18
D 1140,480 1280,490 1480,395 1520,395 E 160,395 180,370 240,320 460,305 570,300 640,260 675,200 680,15`;
line('#e0cf9f', 6.6, motorway); line('#d68a94', 4.9, motorway);
line('#d28490', 8, `A 1330,345 1568,325
B 0,295 12,290
B 12,260 12,320
B 740,880 740,950
B 715,912 760,912
C 5,700 55,710
A 675,1165 675,1195
C 700,528 780,518
E 460,303 510,303
B 5,910 40,930`);

// runways, plane glyphs, camp sites
line('#c3bed6', 5, `C 60,1290 210,1470
C 210,1260 70,1470
D 480,1025 570,1100
D 570,1025 480,1100`);
const plane = 'M0-9c1 0 1.6 1.5 1.6 3v3.5L8.5 2v2L1.6 2v4L4 8v1.5L0 8.6-4 9.500V8l2.400-2V2L-8.500 4V2L-1.600-2.500V-6C-1.600-7.500-1-9 0-9z';
for (const [s, x, y] of [['C', 133, 1347], ['C', 195, 1322], ['D', 527, 1070]]) { const p = pt(s, x, y); out.push(`<path transform="translate(${p})" fill="#8068bb" d="${plane}"/>`); }
for (const [s, x, y] of [['D', 957, 480], ['E', 178, 1165]]) { const p = pt(s, x, y); out.push(`<path transform="translate(${p})" fill="#c9905c" d="M0-5L5 4H-5z"/>`); }
for (const [x, y] of [[805, 82], [757, 162], [720, 243], [625, 408], [658, 447], [593, 480], [538, 613], [519, 713], [532, 846], [540, 1003], [1119, 52], [1214, 100], [1303, 136], [1413, 183], [1460, 207], [1065, 159], [1027, 302], [1014, 383], [1108, 460], [1150, 544], [1191, 713]]) {
  const p = pt('B', x, y); out.push(`<rect x="${p[0] - 2.5}" y="${p[1] - 2.5}" width="5" height="5" fill="#6f78ab"/>`);
}

// tile seams
out.push('<path d="M0 280H3275" stroke="#fff" stroke-width="2.2" opacity=".85"/><path d="M2071 0V536M2412 0V536M2753 0V536M3094 0V536" stroke="#fff" stroke-width="1" opacity=".3"/>');

// labels: sheet, left x, right x, baseline y, text
function label(cls, size, list) {
  for (const l of list.trim().split('\n')) {
    const [s, x1, x2, y, ...w] = l.split(' ');
    const a = pt(s, +x1, +y), b = pt(s, +x2, +y);
    out.push(`<text class="${cls}" font-size="${size}" x="${a[0].toFixed(1)}" y="${a[1].toFixed(1)}" textLength="${(b[0] - a[0]).toFixed(1)}" lengthAdjust="spacingAndGlyphs">${w.join(' ')}</text>`);
  }
}
label('place', 14.3, `A 414 603 62 Briar Forest
A 1504 1630 96 Uptown
A 575 748 325 Westchase
A 287 356 539 Alief
A 1288 1410 472 Gulfton
A 950 1143 638 Sharpstown
A 648 818 1000 Westwood
A 1056 1208 956 Braeburn
A 1382 1554 958 Meyerland
A 859 1039 1245 Brays Oaks
A 1306 1460 1276 Westbury
A 285 512 1306 Meadows Place
B 568 723 105 Montrose
B 852 1105 58 East Downtown
B 1133 1347 62 Second Ward
B 1105 1263 226 Eastwood
B 1443 1675 263 Magnolia Park
B 188 353 282 Greenway
B 543 811 363 Museum District
B 853 1032 369 Third Ward
B 478 702 526 Texas Medical
B 535 641 580 Center
B 865 1047 553 MacGregor
B 1508 1688 560 Pecan Park
B 167 348 778 Braeswood
B -5 249 1070 Near Southwest
B 50 189 1124 Houston
B 776 944 1143 Sunnyside
C 214 411 159 Clinton Park
C 44 212 778 Park Place
C 515 691 1422 Edgebrook`);
label('place', 16.5, `A 1518 1660 607 Bellaire
B 104 402 420 West University
B 204 302 484 Place
C 448 682 252 Galena Park
C 371 658 1158 South Houston
C 1452 1640 615 Deer Park
D 1246 1411 227 Baytown
D 862 1020 1122 La Porte
E 875 1062 144 Beach City`);
label('place', 18, 'C 657 857 799 Pasadena');
label('exit', 13.5, `A 1267 1333 361 121B
A 1493 1540 342 123
A 1177 1225 485 119
A 665 706 420 12b
A 897 944 845 117
A 755 803 1050 117
A 708 775 1094 115C
A 657 724 1160 115A
A 608 655 1243 115
A 533 580 1335 114
A 483 531 1402 114
A 425 473 1475 112
A 362 410 1558 113
B 27 64 44 8D
B 10 44 150 8C
B 0 34 228 8B
B 36 145 290 123·124
B -3 30 360 8B
B -3 30 413 8A
B 5 20 454 7
B 3 18 540 6
B 13 29 672 6
B 5 40 808 5B
B 3 38 854 4A
B 2 37 892 4B
B 92 127 944 4A
B 149 165 948 3
B 195 211 945 2
B 299 315 962 3
B 337 369 970 1C
B 439 455 960 2
B 516 549 949 1C
B 636 669 925 1A
B 763 796 927 37
B 880 913 926 37
B 960 1014 925 36A
B 1059 1113 875 36A
B 1125 1158 854 35
B 1224 1275 790 34A
B 1324 1375 724 34A
B 1417 1450 729 33
B 372 440 288 126B
B 466 534 281 126B
B 618 686 269 127B
B 804 872 245 129A
B 822 889 202 128B
B 851 918 161 129B
B 870 938 112 129A
B 970 1004 165 46
B 1087 1140 287 44B
B 1151 1184 336 45
B 1262 1315 435 43B
B 1337 1389 500 41B
B 1414 1465 572 41A
B 1502 1555 654 40B
B 1536 1586 733 32A
C 219 252 225 29
C 216 249 277 29
C 206 258 406 30A
C 207 258 508 30C
C 196 248 560 30D
C 132 163 622 31
C 61 110 683 32A
C 86 119 836 39
C 112 163 884 38B
C 188 221 970 39
C 213 246 1010 38
C 269 302 1115 36
C 330 363 1240 38
C 358 391 1304 35
C 420 453 1423 36
C 443 476 1463 34`);
label('grey', 13, `B 1452 1554 1175 Garden
B 1468 1538 1221 Villas`);
label('site', 13, `C 1461 1580 335 REMEX
C 1440 1580 381 Deer Park
C 1452 1560 427 Refinery`);
label('park-name', 13.5, `D 304 488 58 Battleground
D 302 487 103 State Historic
D 372 419 149 Site`);
label('air', 13.5, `C 81 186 1410 William
C 75 193 1458 P. Hobby
C 83 183 1504 Airport`);
{ const p = pt('A', 715, 1490); out.push(`<text class="site" font-size="14" textLength="61" transform="translate(${p}) rotate(24)">Fort Bend</text>`); }

function shield(s, x1, y1, x2, y2, text, fm) {
  const a = pt(s, x1, y1), b = pt(s, x2, y2), w = b[0] - a[0], h = b[1] - a[1];
  out.push(`<rect x="${a[0]}" y="${a[1]}" width="${w}" height="${h}" rx="2.5" fill="${fm ? '#f0f1d0' : '#e7cbd2'}" stroke="${fm ? '#c6c99c' : '#ce8f9d'}" stroke-width="1.5"/><text class="${fm ? 'ref-fm' : 'ref'}" font-size="13.5" text-anchor="middle" x="${a[0] + w / 2}" y="${a[1] + h / 2 + 5}" textLength="${text === 'TX 288 Toll' ? w - 36 : text === 'TX 99 Toll' ? w - 30 : w - (text.length > 3 ? 18 : 10)}" lengthAdjust="spacingAndGlyphs">${text}</text>`);
}
shield('A', 911, 368, 997, 434, 'WPT');
shield('A', 77, 926, 240, 989, 'FM 1876', 1);
shield('B', 559, 1318, 803, 1382, 'TX 288 Toll');
shield('C', 474, 543, 620, 608, 'TX 225');
shield('C', 1229, 564, 1314, 628, 'SHT');
shield('D', 702, 788, 848, 852, 'TX 225');
shield('D', 1137, 458, 1261, 525, 'TX 99');
shield('D', 1512, 382, 1735, 446, 'TX 99 Toll');
shield('E', 249, 801, 403, 863, 'FM 1405', 1);

// fire markers; each entry is the tip position in map pixels
const C = (x, y) => pt('C', x, y), N = (x, y) => [1768 + x / 3, -5 + y / 3];
const tips = [C(930, 60), N(860, 33), N(625, 135), N(608, 140), N(560, 140), N(577, 155), N(125, 178), N(152, 180),
  C(816, 218), C(634, 312), C(642, 314), C(540, 335), N(644, 354), N(628, 377), N(1077, 322), N(1072, 345), C(1034, 460), C(543, 466), C(518, 469), pt('D', 537, 495)].map(([x, y]) => [x, y + 1.5]);
out.push('<defs><linearGradient id="pin" x1="0" y1="0" x2="0" y2="1"><stop offset="0" stop-color="#4b8fcc"/><stop offset="1" stop-color="#2f6fc4"/></linearGradient><filter id="soft" x="-50%" y="-50%" width="200%" height="200%"><feGaussianBlur stdDeviation="2.6"/></filter></defs>');
const body = 'M12.500.5C5.800.5.5 5.800.5 12.400c0 3 1 5.300 2.200 7.600L12.500 40.500 22.300 20c1.200-2.300 2.200-4.600 2.200-7.600C24.500 5.800 19.200.5 12.500.5z';
for (const t of tips) out.push(`<path transform="translate(${t}) scale(1.333) skewX(-34) scale(.9 .62)" d="M0 0L-9-20Q-10-36 0-38Q10-36 9-20z" opacity=".36" filter="url(#soft)"/>`);
for (const t of tips) out.push(`<g transform="translate(${t}) scale(1.333) translate(-12.5 -41)"><path d="${body}" fill="url(#pin)" stroke="#3570a8" stroke-width="1"/><circle cx="12.5" cy="12.8" r="4.4" fill="#fff" stroke="#376fae" stroke-width=".8"/></g>`);

document.getElementById('tiles').innerHTML = out.join('');
```
